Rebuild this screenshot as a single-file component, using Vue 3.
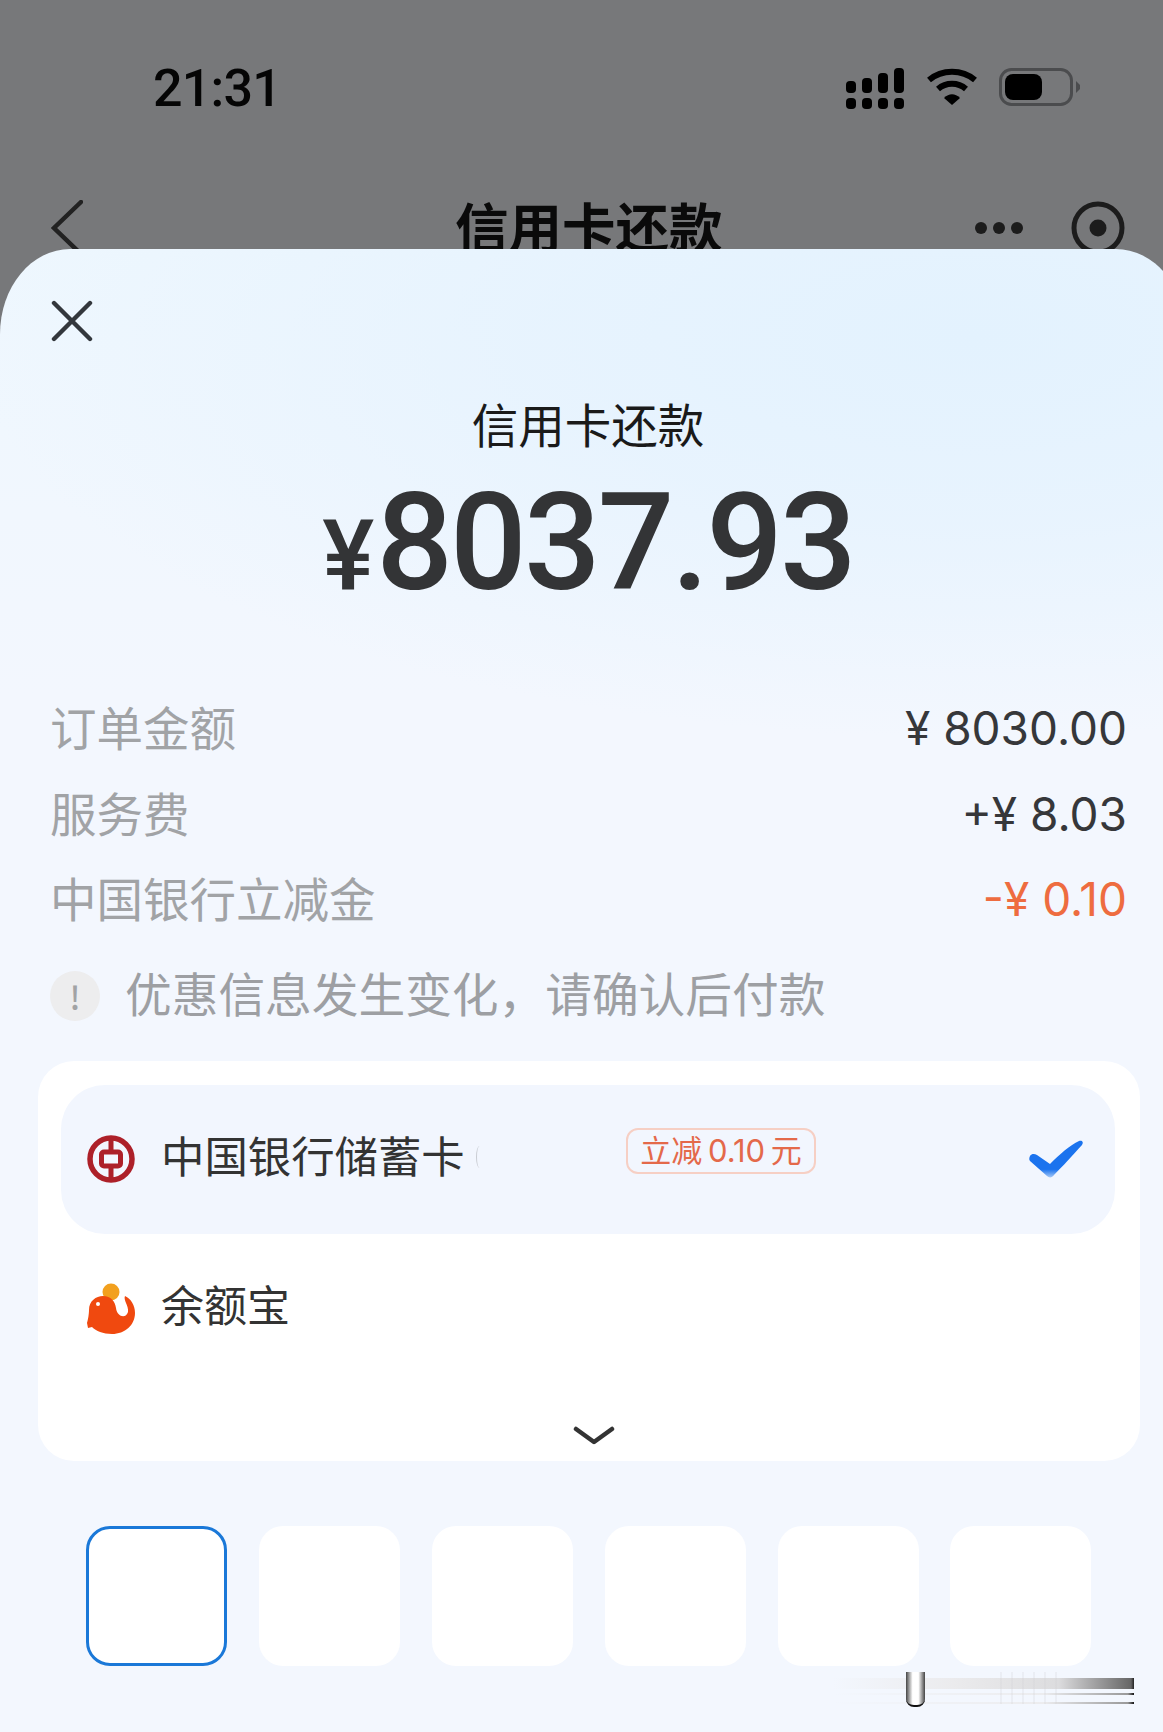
<script setup>
const rows = [
  { label: '订单金额', value: '¥ 8030.00' },
  { label: '服务费', value: '+¥ 8.03' },
  { label: '中国银行立减金', value: '-¥ 0.10', accent: true },
]
const boxes = [0, 1, 2, 3, 4, 5]
</script>

<template>
  <div class="page">
    <header class="top">
      <div class="status">
        <span class="time">21:31</span>
        <div class="status-icons">
          <svg class="signal" width="60" height="44" viewBox="0 0 60 44" fill="#000">
            <rect x="1" y="14" width="10" height="12" rx="4"/><rect x="17" y="11" width="10" height="15" rx="4"/><rect x="33" y="6" width="10" height="20" rx="4"/><rect x="49" y="1" width="10" height="25" rx="4"/>
            <rect x="1" y="31" width="10" height="11" rx="4"/><rect x="17" y="31" width="10" height="11" rx="4"/><rect x="33" y="31" width="10" height="11" rx="4"/><rect x="49" y="31" width="10" height="11" rx="4"/>
          </svg>
          <svg class="wifi" width="52" height="38" viewBox="0 0 52 38" fill="none" stroke="#000" stroke-width="6">
            <path d="M3 12 C16 1 36 1 49 12"/><path d="M12 21 C20 14 32 14 40 21"/><path d="M18 30 L26 37 L34 30 C29 25 23 25 18 30Z" fill="#000" stroke="none"/>
          </svg>
          <svg class="battery" width="82" height="38" viewBox="0 0 82 38">
            <rect x="1.5" y="1.5" width="71" height="35" rx="11" fill="none" stroke="#4b4c4e" stroke-width="3"/>
            <rect x="6" y="6" width="37" height="26" rx="8" fill="#000"/>
            <path d="M77 13 L81 17 V21 L77 25Z" fill="#4b4c4e"/>
          </svg>
        </div>
      </div>
      <div class="nav">
        <svg class="back" width="32" height="56" viewBox="0 0 32 56" fill="none" stroke="#222" stroke-width="4.5" stroke-linecap="round"><path d="M30 2 L3 28 L30 54"/></svg>
        <span class="nav-title">信用卡还款</span>
        <div class="capsule">
          <svg width="50" height="14" viewBox="0 0 50 14" fill="#1c1c1c"><circle cx="7" cy="7" r="6"/><circle cx="25" cy="7" r="6"/><circle cx="43" cy="7" r="6"/></svg>
          <svg width="54" height="54" viewBox="0 0 54 54" fill="none"><circle cx="27" cy="27" r="24" stroke="#1c1c1c" stroke-width="5"/><circle cx="27" cy="27" r="8.5" fill="#1c1c1c"/></svg>
        </div>
      </div>
    </header>

    <main class="sheet">
      <div class="close-row">
        <svg width="42" height="42" viewBox="0 0 42 42" stroke="#33373c" stroke-width="4.4" stroke-linecap="round"><path d="M3 3 L39 39 M39 3 L3 39"/></svg>
      </div>
      <h1 class="title">信用卡还款</h1>
      <div class="amount"><span class="yen">¥</span><span class="num">8037.93</span></div>

      <section class="rows">
        <div v-for="r in rows" :key="r.label" class="row">
          <span class="label">{{ r.label }}</span>
          <span class="value" :class="{ accent: r.accent }">{{ r.value }}</span>
        </div>
      </section>

      <div class="notice">
        <span class="notice-icon">!</span>
        <span class="notice-text">优惠信息发生变化，请确认后付款</span>
      </div>

      <section class="card">
        <div class="pay selected">
          <svg class="pay-icon boc" width="48" height="48" viewBox="0 0 48 48" fill="none" stroke="#ad2029">
            <circle cx="24" cy="24" r="21" stroke-width="5.5"/>
            <rect x="14.5" y="17" width="19" height="14" rx="2.5" stroke-width="5"/>
            <path d="M24 3 V17 M24 31 V45" stroke-width="5"/>
          </svg>
          <span class="pay-name bank">中国银行储蓄卡<i class="cut"></i></span>
          <span class="badge">立减 0.10 元</span>
          <svg class="check" width="58" height="40" viewBox="0 0 58 40">
            <defs>
              <linearGradient id="checkFill" x1="0" y1="0" x2="0" y2="1">
                <stop offset="0.78" stop-color="#1b73ee"/>
                <stop offset="1" stop-color="#a6c8f6"/>
              </linearGradient>
            </defs>
            <path d="M3 17 C5 14 8 15 10 16 L23 25 C33 15 43 6 52 2 C55 1 57 3 55 6 C46 16 35 28 27 36 C25 39 22 39 20 37 L3 22 C2 21 2 19 3 17Z" fill="url(#checkFill)"/>
          </svg>
        </div>
        <div class="pay">
          <svg class="pay-icon" width="52" height="54" viewBox="0 0 52 54">
            <circle cx="26" cy="10" r="8.5" fill="#f2a01e"/>
            <path d="M4 28 C4 19 11 14 18 14 C26 14 30 19 31 26 C32 35 41 37 43 30 C44 24 38 18 40 14 C46 17 50 23 50 31 C50 43 40 52 27 52 C18 52 11 49 7 45 L3 46 L2 41 C3 38 4 32 4 28Z" fill="#f0490f"/>
            <circle cx="13" cy="22" r="2" fill="#fff"/>
          </svg>
          <span class="pay-name">余额宝</span>
        </div>
        <div class="more">
          <svg width="42" height="20" viewBox="0 0 42 20" fill="none" stroke="#333" stroke-width="4.5" stroke-linecap="round" stroke-linejoin="round"><path d="M3 3 L21 16 L39 3"/></svg>
        </div>
      </section>

      <section class="boxes">
        <div v-for="b in boxes" :key="b" class="box" :class="{ active: b === 0 }"></div>
      </section>

      <div class="glitch" aria-hidden="true">
        <div class="glitch-bar"></div>
        <div class="glitch-line one"></div>
        <div class="glitch-line two"></div>
        <div class="glitch-ticks"></div>
        <div class="glitch-u"></div>
      </div>
    </main>
  </div>
</template>

<style>
html, body { margin: 0; background: #77787a; }
</style>

<style scoped>
.page {
  width: 1163px;
  height: 1732px;
  overflow: hidden;
  background: #77787a;
  font-family: "Noto Sans CJK SC", "Noto Sans", sans-serif;
}
.top { height: 249px; overflow: hidden; }
.status {
  height: 198px;
  box-sizing: border-box;
  padding: 64px 82px 0 153px;
  display: flex;
  justify-content: space-between;
  align-items: flex-start;
}
.time {
  margin-top: 1px;
  font-family: Roboto, sans-serif;
  font-weight: 500;
  font-size: 52px;
  line-height: 48px;
  letter-spacing: -0.8px;
  color: #050505;
}
.status-icons { display: flex; align-items: flex-start; }
.signal { margin-top: 3px; }
.wifi { margin-left: 21px; margin-top: 4px; }
.battery { margin-left: 21px; margin-top: 4px; }
.nav {
  height: 60px;
  padding: 0 38px 0 51px;
  display: flex;
  align-items: center;
  position: relative;
  justify-content: space-between;
}
.nav-title {
  position: absolute;
  left: 455px;
  top: -11px;
  font-size: 53.5px;
  line-height: 76px;
  font-weight: 700;
  color: #0a0a0a;
}
.capsule { display: flex; align-items: center; gap: 47px; }

.sheet {
  position: relative;
  width: 1186px;
  height: 1483px;
  box-sizing: border-box;
  padding-right: 23px;
  border-radius: 70px 70px 0 0 / 85px 85px 0 0;
  background:
    radial-gradient(ellipse 1000px 400px at 82% 6%, #e3f2fe 0%, rgba(228, 242, 254, 0.7) 45%, rgba(243, 247, 254, 0) 100%),
    linear-gradient(180deg, #eef7fe 0%, #f3f7fe 30%);
}
.close-row { padding: 51px 0 0 51px; height: 42px; line-height: 0; }
.title {
  margin: 51px 0 0;
  padding-left: 13px;
  text-align: center;
  font-size: 46.5px;
  line-height: 60px;
  font-weight: 400;
  color: #1a1a1a;
}
.amount {
  margin-top: 20px;
  height: 140px;
  display: flex;
  justify-content: center;
  align-items: baseline;
  padding-left: 13px;
  font-family: Roboto, sans-serif;
  font-weight: 500;
  color: #333436;
  line-height: 140px;
}
.yen { font-size: 98px; font-weight: 500; margin-right: 2px; }
.num { font-size: 135px; letter-spacing: -2.9px; }
.rows { margin-top: 71px; padding: 0 36px 0 50px; }
.row {
  height: 85.5px;
  display: flex;
  align-items: center;
  justify-content: space-between;
}
.label { font-size: 46.5px; line-height: 60px; color: #a1a3a6; margin-top: -1px; }
.value { font-family: Inter, "Noto Sans", sans-serif; font-size: 46px; line-height: 60px; color: #36373a; margin-top: 3px; }
.value.accent { color: #ee6c40; }
.notice {
  margin-top: 30px;
  padding-left: 50px;
  height: 50px;
  display: flex;
  align-items: center;
}
.notice-icon {
  width: 50px;
  height: 50px;
  border-radius: 50%;
  background: #ededee;
  color: #a2a3a5;
  font-size: 32px;
  font-weight: 500;
  line-height: 50px;
  text-align: center;
  flex: none;
}
.notice-text { margin: -8px 0 0 25px; font-size: 46.7px; line-height: 60px; color: #9d9fa3; white-space: nowrap; }

.card {
  margin: 40px 23px 0 38px;
  height: 400px;
  box-sizing: border-box;
  padding: 24px 25px 0 23px;
  background: #fff;
  border-radius: 36px;
}
.pay {
  height: 149px;
  box-sizing: border-box;
  padding: 0 30px 0 26px;
  display: flex;
  align-items: center;
  position: relative;
}
.pay.selected { background: #f2f6fe; border-radius: 44px; }
.pay-icon { flex: none; }
.pay-icon:not(.boc) { margin-left: -2px; margin-right: -2px; margin-top: 2px; }
.pay-name {
  margin-left: 26px;
  margin-top: -11px;
  font-size: 43px;
  line-height: 60px;
  color: #333;
  white-space: nowrap;
}
.pay-name.bank { width: 465px; flex: none; margin-left: 26px; position: relative; font-size: 43.4px; }
.cut {
  position: absolute;
  left: 315px;
  top: 22px;
  width: 6px;
  height: 22px;
  border-left: 1px solid #c9ccd2;
  border-radius: 50%;
}
.badge {
  flex: none;
  box-sizing: border-box;
  margin-top: -17px;
  width: 190px;
  height: 46px;
  border: 2px solid #f6cfc4;
  border-radius: 12px;
  text-align: center;
  font-family: Inter, "Noto Sans CJK SC", sans-serif;
  font-size: 31px;
  word-spacing: -3px;
  line-height: 42px;
  color: #e4694a;
  white-space: nowrap;
}
.check { margin-left: auto; }
.more { height: 78px; box-sizing: border-box; display: flex; justify-content: center; align-items: flex-end; padding: 0 0 15px 12px; }

.boxes {
  margin-top: 65px;
  padding-left: 86px;
  display: flex;
  gap: 31.9px;
}
.box {
  width: 141px;
  height: 140px;
  box-sizing: border-box;
  background: #fff;
  border-radius: 24px;
}
.box.active { border: 3px solid #1a78d8; }

.glitch { position: absolute; left: 0; top: 0; width: 0; height: 0; }
.glitch-bar {
  position: absolute;
  left: 833px;
  top: 1429px;
  width: 301px;
  height: 11px;
  background: linear-gradient(90deg, rgba(230, 230, 232, 0), #ebebed 40%, #dcdcde 75%, #666 99%, #222);
}
.glitch-line { position: absolute; left: 833px; width: 301px; height: 2px; background: linear-gradient(90deg, rgba(230,230,232,0), #ececee 70%, #999 98%, #111); }
.glitch-line.one { top: 1444px; }
.glitch-line.two { top: 1453px; }
.glitch-ticks {
  position: absolute;
  left: 1000px;
  top: 1423px;
  width: 65px;
  height: 32px;
  background: repeating-linear-gradient(90deg, rgba(205, 205, 210, 0.22) 0 2px, rgba(205, 205, 210, 0) 2px 11px);
}
.glitch-u {
  position: absolute;
  left: 906px;
  top: 1423px;
  width: 19px;
  height: 35px;
  box-sizing: border-box;
  background: linear-gradient(90deg, #444, #fff 35%, #fff 65%, #444);
  border-bottom: 2px solid #111;
  border-radius: 0 0 8px 8px;
}
</style>
